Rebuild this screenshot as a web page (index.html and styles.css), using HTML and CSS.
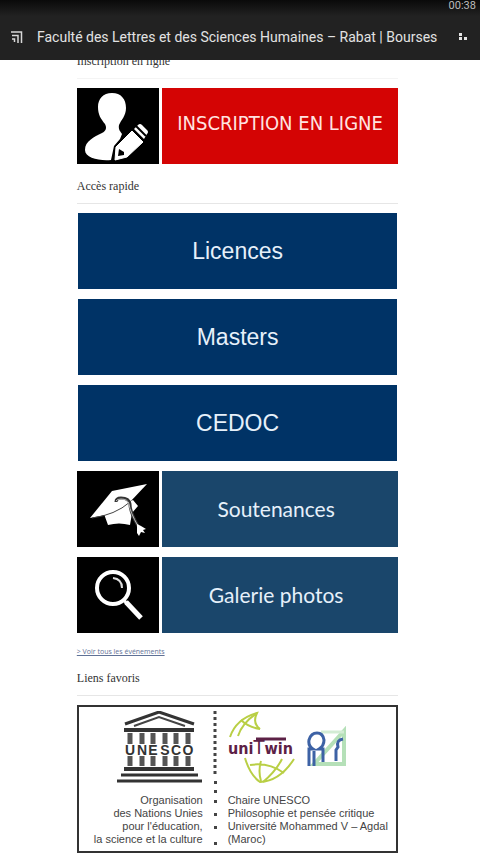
FILE: index.html
```html
<!DOCTYPE html>
<html lang="fr">
<head>
  <meta charset="UTF-8">
  <meta name="viewport" content="width=device-width, initial-scale=1.0">
  <title>Faculté des Lettres et des Sciences Humaines – Rabat | Bourses</title>
  <link rel="stylesheet" href="styles.css">
</head>
<body>
  <header class="topbar">
    <div class="status">00:38</div>
    <div class="app-header">
      <svg class="app-icon" width="12" height="12" viewBox="0 0 12 12" aria-hidden="true">
        <path d="M0 1H10.5V12M1 4.5H7V12M1 8H3.5V11" fill="none" stroke="#d8d8d8" stroke-width="1.5"/>
      </svg>
      <span class="app-title">Faculté des Lettres et des Sciences Humaines – Rabat | Bourses</span>
      <button class="menu-btn" type="button" aria-label="Menu">
        <svg width="8" height="8" viewBox="0 0 8 8" aria-hidden="true">
          <path d="M0 0h3v3h-3zM0 4h3v3h-3zM5 4h3v3h-3z" fill="#e4e4e4"/>
        </svg>
      </button>
    </div>
  </header>

  <main class="sidebar">
    <h2 class="widget-title first">Inscription en ligne</h2>
    <a class="tile split red" href="#">
      <span class="tile-icon">
        <svg width="82" height="76" viewBox="0 0 82 76" aria-hidden="true">
          <path d="M35 5C44 5 49 11 49 20C49 28 44 32 42 37C41 42 44 44 45 46L43 51L37 58L34 72C22 73 8 70 8 62C8 53 17 49 25 45C29 43 30 40 28 36C24 31 21 27 21 19C21 11 26 5 35 5Z" fill="#fff"/>
          <path d="M39 59L55 43L66 54L50 69L38 72Z" fill="#fff" stroke="#fff" stroke-linejoin="round"/>
          <path d="M57 41L61 37Q63 35 65 37L70 42Q72 44 70 46L67 51Z" fill="#fff"/>
          <path d="M59 38L69 48" stroke="#000" stroke-width="2"/>
          <path d="M42 61L47 64L47 67L41 68Z" fill="#000"/>
        </svg>
      </span>
      <span class="tile-label">INSCRIPTION EN LIGNE</span>
    </a>

    <h2 class="widget-title">Accès rapide</h2>
    <nav class="tiles">
      <a class="tile navy" href="#">Licences</a>
      <a class="tile navy" href="#">Masters</a>
      <a class="tile navy" href="#">CEDOC</a>
      <a class="tile split steel" href="#">
        <span class="tile-icon">
          <svg width="82" height="76" viewBox="0 0 82 76" aria-hidden="true">
            <path d="M27 43L31 54Q42 51 53 54L55 42L61 35L56 29Z" fill="#fff"/>
            <path d="M13 47L35 20L70 13L53 31Q40 43 13 47Z" fill="#fff"/>
            <path d="M15 47Q38 44 53 31" fill="none" stroke="#444" stroke-width="1"/>
            <path d="M39 31Q39 27 44 27Q52 27 53 33Q53 41 61 55" fill="none" stroke="#333" stroke-width="3"/>
            <path d="M39 30Q40 28 44 28Q51 28 52 33Q53 41 61 55" fill="none" stroke="#bbb" stroke-width="1"/>
            <path d="M60 53L64 55L69 58L66 59L68 62L64 61L62 65L60 62Z" fill="#fff"/>
          </svg>
        </span>
        <span class="tile-label">Soutenances</span>
      </a>
      <a class="tile split steel" href="#">
        <span class="tile-icon">
          <svg width="82" height="76" viewBox="0 0 82 76" fill="none" stroke="#fff" aria-hidden="true">
            <circle cx="36" cy="31" r="16" stroke-width="4"/>
            <path d="M36 21Q45 22 45 31" stroke="#ddd" stroke-width="2"/>
            <path d="M47 43L50 47" stroke-width="3"/>
            <path d="M49 45L64 61" stroke-width="5"/>
          </svg>
        </span>
        <span class="tile-label">Galerie photos</span>
      </a>
    </nav>
    <a class="more-link" href="#">&gt; Voir tous les événements</a>

    <h2 class="widget-title">Liens favoris</h2>
    <a class="partner" href="#">
      <span class="partner-left">
        <svg width="86" height="72" viewBox="0 0 86 72" role="img" aria-label="UNESCO">
          <path d="M8 13L42 1L77 13" fill="none" stroke="#333" stroke-width="3"/>
          <path d="M17 15L42 6L68 15" fill="none" stroke="#444" stroke-width="2"/>
          <path d="M7 19H77M7 58H77" stroke="#333" stroke-width="4"/>
          <path d="M4 64H81M0 70H85" stroke="#333" stroke-width="3"/>
          <path d="M13 22V33M25 22V33M36 22V33M48 22V33M59 22V33M71 22V33M13 45V55M25 45V55M36 45V55M48 45V55M59 45V55M71 45V55" stroke="#555" stroke-width="5"/>
          <g class="unesco-letters">
            <text x="13" y="44">U</text>
            <text x="25" y="44">N</text>
            <text x="36" y="44">E</text>
            <text x="48" y="44">S</text>
            <text x="59" y="44">C</text>
            <text x="71" y="44">O</text>
          </g>
        </svg>
        <span class="partner-text">Organisation<br>des Nations Unies<br>pour l'éducation,<br>la science et la culture</span>
      </span>
      <svg class="partner-dots" width="25" height="135" viewBox="0 0 25 135" aria-hidden="true">
        <path d="M12 0V65" stroke="#444" stroke-width="3" stroke-dasharray="3 3"/>
        <path d="M11 70h3v3h-3zM11 79h3v3h-3zM11 89h3v3h-3zM11 102h3v3h-3zM11 115h3v3h-3zM11 131h3v3h-3z" fill="#444"/>
      </svg>
      <span class="partner-right">
        <svg width="120" height="72" viewBox="0 0 120 72" role="img" aria-label="uniTwin">
          <g fill="none" stroke="#b9cf45" stroke-width="2">
            <path d="M2 26Q8 8 29 2Q24 12 32 18"/>
            <path d="M10 25Q14 12 29 2M13 9Q20 16 32 18"/>
            <path d="M17 47Q22 64 32 71Q52 70 66 48"/>
            <path d="M22 54Q40 51 56 62M33 50Q30 60 33 70M54 48Q48 60 35 71"/>
          </g>
          <text class="unitwin" x="0" y="43">uni<tspan class="unitwin-t">T</tspan>win</text>
          <path d="M28 28H58" stroke="#5c2146" stroke-width="3"/>
          <path d="M86 53L116 20V53Z" fill="none" stroke="#b5e0b8" stroke-width="4"/>
          <path d="M93 21H116" stroke="#d3ecd4" stroke-width="3"/>
          <g fill="none" stroke="#3d62a5" stroke-width="3">
            <path d="M81 55V38H85Q80 35 81 29Q83 22 89 22Q95 22 96 29Q96 35 91 38H95V51M86 55V40"/>
            <path d="M115 28Q108 29 110 36L108 39V50"/>
          </g>
        </svg>
        <span class="partner-text">Chaire UNESCO<br>Philosophie et pensée critique<br>Université Mohammed V – Agdal<br>(Maroc)</span>
      </span>
    </a>
  </main>
</body>
</html>
```
FILE: styles.css
```css
* {
  box-sizing: border-box;
}
body {
  margin: 0;
  background: #fff;
  color: #333;
  font-family: "Open Sans", "Noto Sans", sans-serif;
}
a {
  text-decoration: none;
}
svg {
  display: block;
  flex: none;
}

/* top bar */
.topbar {
  position: sticky;
  top: 0;
  z-index: 10;
  height: 60px;
  background: linear-gradient(#0a0a0a, #222 16px);
  color: #e2e2e2;
  font-family: Roboto, sans-serif;
}
.status {
  height: 14px;
  padding-right: 4px;
  font-size: 11px;
  line-height: 11px;
  text-align: right;
  color: #bbb;
}
.app-header {
  display: flex;
  align-items: center;
  height: 46px;
  padding: 0 13px 0 11px;
}
.app-title {
  flex: 1;
  margin-left: 14px;
  font-size: 14px;
  white-space: nowrap;
}
.menu-btn {
  padding: 0;
  border: none;
  background: none;
  cursor: pointer;
}

/* widgets */
.sidebar {
  padding: 0 17% 4px 16%;
}
.widget-title {
  margin: 12px 0 9px;
  padding-bottom: 7px;
  border-bottom: 1px solid #e6e6e6;
  font-family: "Liberation Serif", serif;
  font-size: 12px;
  font-weight: normal;
  line-height: 20px;
}
.widget-title.first {
  margin-top: -9px;
  border-color: #f4f4f4;
}
.tiles {
  display: flex;
  flex-direction: column;
  gap: 10px;
}
.tile {
  display: flex;
  align-items: center;
  justify-content: center;
  height: 76px;
  color: #e6f0fa;
}
.navy {
  margin: 0 1px;
  background: #003366;
  font-family: "Liberation Sans", Arial, sans-serif;
  font-size: 23px;
}
.split {
  align-items: stretch;
  gap: 3px;
}
.tile-icon {
  flex: none;
  background: #000;
}
.tile-label {
  display: flex;
  flex: 1;
  align-items: center;
  justify-content: center;
  padding-bottom: 6px;
}
.red .tile-label {
  background: #d40404;
  color: #ffe3e0;
  font-family: "DejaVu Sans Condensed", "DejaVu Sans", sans-serif;
  font-size: 20px;
}
.steel .tile-label {
  padding: 0 8px 2px 0;
  background: #1a466b;
  font-family: Lato, "Open Sans", sans-serif;
  font-size: 21px;
}
.more-link {
  display: block;
  margin-top: 15px;
  color: #5f7196;
  font-size: 7px;
  line-height: 8px;
  text-decoration: underline;
}

/* partner banner */
.partner {
  display: flex;
  border: 2px solid #333;
  padding: 4px 0 5px;
  color: #444;
  font-family: "Liberation Sans", Arial, sans-serif;
  font-size: 11px;
  line-height: 13px;
}
.partner-left,
.partner-right {
  display: flex;
  flex-direction: column;
  gap: 11px;
  white-space: nowrap;
}
.partner-left {
  flex: 0 0 39%;
  align-items: flex-end;
  text-align: right;
}
.partner-right {
  flex: 1;
}
.unesco-letters {
  fill: #333;
  font-size: 14px;
  font-weight: bold;
  text-anchor: middle;
}
.unitwin {
  fill: #5c2146;
  font-family: "DejaVu Sans Condensed", "DejaVu Sans", sans-serif;
  font-size: 16px;
  font-weight: bold;
}
.unitwin-t {
  font-size: 20px;
  font-weight: normal;
}
```
